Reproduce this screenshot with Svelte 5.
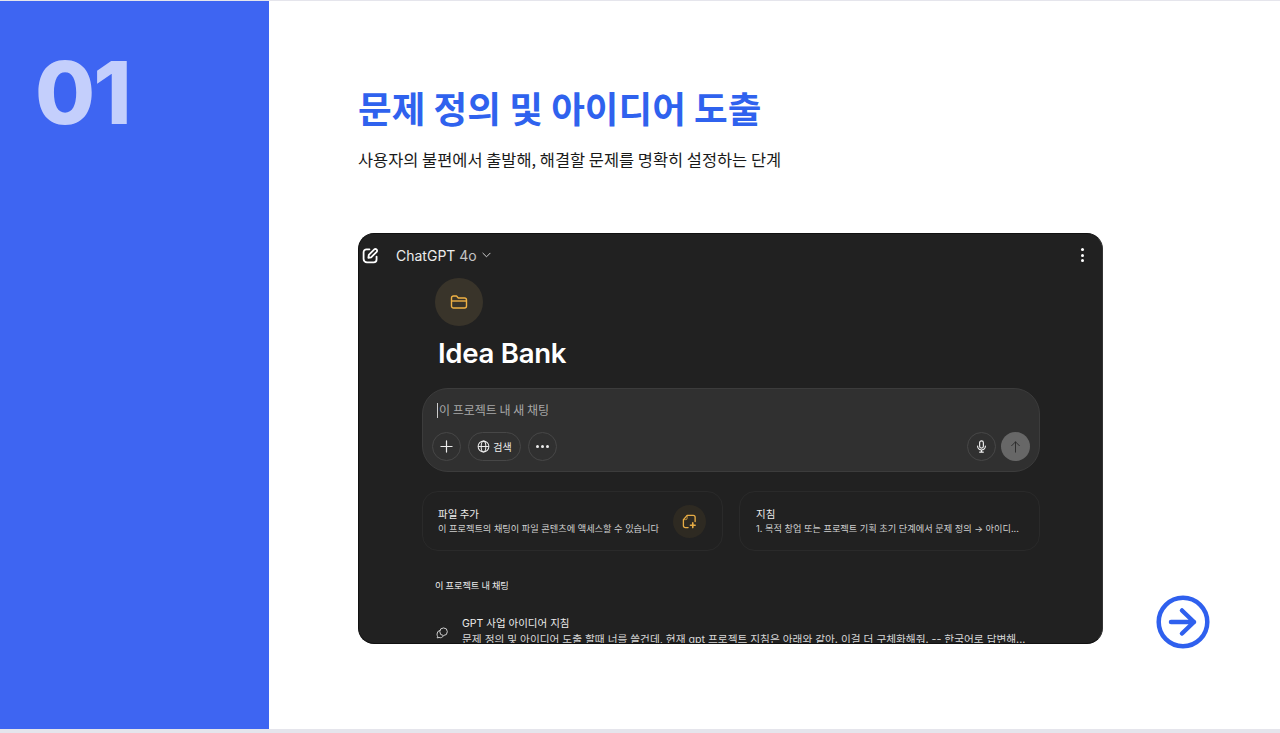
<script>
  const actions = [
    { title: '파일 추가', desc: '이 프로젝트의 채팅이 파일 콘텐츠에 액세스할 수 있습니다', icon: true },
    { title: '지침', desc: '1. 목적 창업 또는 프로젝트 기획 초기 단계에서 문제 정의 → 아이디...', icon: false }
  ];
</script>

<div class="page">
  <aside class="side"><span class="num">01</span></aside>
  <main class="content">
    <h1>문제 정의 및 아이디어 도출</h1>
    <p class="sub">사용자의 불편에서 출발해, 해결할 문제를 명확히 설정하는 단계</p>
    <div class="row">
      <section class="shot">
        <header class="bar">
          <svg class="edit" viewBox="0 0 16 16" fill="none" stroke="#fff" stroke-width="1.7" stroke-linecap="round" stroke-linejoin="round">
            <path d="M7 2.200H4.200A2.700 2.700 0 0 0 1.500 4.900v6.400A3.200 3.200 0 0 0 4.700 14.500h6.300a2.700 2.700 0 0 0 2.700-2.700V9" />
            <path d="M6 10.200l.4-2.700 5.200-5.200a1.400 1.400 0 0 1 2 0l.2.2a1.400 1.400 0 0 1 0 2L8.600 9.700z" />
          </svg>
          <span class="model">ChatGPT <em>4o</em></span>
          <svg class="chev" viewBox="0 0 10 6" fill="none" stroke="#d0d0d0" stroke-width="1.100" stroke-linecap="round" stroke-linejoin="round"><path d="M1 1l4 4 4-4" /></svg>
          <span class="dots"><i></i><i></i><i></i></span>
        </header>
        <div class="body">
          <div class="folder">
            <svg viewBox="0 0 18 16" fill="none" stroke="#f0b144" stroke-width="1.400" stroke-linejoin="round"><path d="M1.500 4a2 2 0 0 1 2-2h3l1.800 2H14.500a2 2 0 0 1 2 2v6a2 2 0 0 1-2 2h-11a2 2 0 0 1-2-2z" /><path d="M1.500 7h15" /></svg>
          </div>
          <h2>Idea Bank</h2>
          <div class="composer">
            <div class="ph"><span class="caret"></span>이 프로젝트 내 새 채팅</div>
            <div class="tools">
              <span class="btn round">
                <svg viewBox="0 0 14 14" fill="none" stroke="#ececec" stroke-width="1.300" stroke-linecap="round"><path d="M7 1v12M1 7h12" /></svg>
              </span>
              <span class="btn pill">
                <svg viewBox="0 0 14 14" fill="none" stroke="#ececec" stroke-width="1.100"><circle cx="7" cy="7" r="5.800" /><ellipse cx="7" cy="7" rx="2.500" ry="5.800" /><path d="M1.200 7h11.600" /></svg>
                검색
              </span>
              <span class="btn round more"><i></i><i></i><i></i></span>
              <span class="grow"></span>
              <span class="btn round">
                <svg viewBox="0 0 14 16" fill="none" stroke="#f2f2f2" stroke-width="1.400" stroke-linecap="round"><rect x="4.700" y="1" width="4.600" height="9" rx="2.300" /><path d="M2.200 7.500a4.800 4.800 0 0 0 9.600 0M7 12.500V15M4.800 15h4.400" /></svg>
              </span>
              <span class="send">
                <svg viewBox="0 0 12 14" fill="none" stroke="#2a2a2a" stroke-width="1.100" stroke-linecap="round" stroke-linejoin="round"><path d="M6 13V1M1.500 5.500L6 1l4.500 4.500" /></svg>
              </span>
            </div>
          </div>
          <div class="cards">
            {#each actions as a}
              <div class="card">
                <div class="card-text">
                  <strong>{a.title}</strong>
                  <span>{a.desc}</span>
                </div>
                {#if a.icon}
                  <span class="file-ic">
                    <svg viewBox="0 0 16 16" fill="none" stroke="#e8ad45" stroke-width="1.400" stroke-linecap="round" stroke-linejoin="round"><path d="M6.500 14.500H3.500a2 2 0 0 1-2-2V6L5.500 1.500H12a2 2 0 0 1 2 2V8" /><path d="M5.500 1.500V4.500a1.500 1.500 0 0 1-1.500 1.500H1.500" stroke-width=".8" /><path d="M11.500 9.500v5M9 12h5" stroke-width="1.700" /></svg>
                  </span>
                {/if}
              </div>
            {/each}
          </div>
          <div class="sect">이 프로젝트 내 채팅</div>
          <div class="chat">
            <svg class="bubble" viewBox="0 0 14 13" fill="none" stroke="#d0d0d0" stroke-width="1.150"><circle cx="8.800" cy="5" r="4.400" /><path d="M4.800 3.400a4.500 4.500 0 0 0-3.600 4.400c0 1.100 .3 1.900 .7 2.500l-.5 1.900 2.200-.5c1.900 .8 4 0 4.900-1.700" /></svg>
            <div class="chat-text">
              <b>GPT 사업 아이디어 지침</b>
              <span>문제 정의 및 아이디어 도출 할때 너를 쓸건데, 현재 gpt 프로젝트 지침은 아래와 같아. 이걸 더 구체화해줘. -- 한국어로 답변해...</span>
            </div>
          </div>
        </div>
      </section>
      <button class="next" aria-label="다음">
        <svg viewBox="0 0 54 54" fill="none" stroke="#2f60ee" stroke-linecap="round" stroke-linejoin="round"><circle cx="27" cy="27" r="24.300" stroke-width="4.500" /><path d="M15 27h23M26 15.500L38 27 26 38.500" stroke-width="4.500" /></svg>
      </button>
    </div>
  </main>
</div>

<style>
  :global(body) { margin: 0; background: #e5e5ec; }
  .page {
    height: 728px; margin-top: 1px; display: flex; background: #fff; overflow: hidden;
    font-family: Inter, "Noto Sans CJK KR", sans-serif;
  }
  .side { width: 269px; flex: none; background: #3e65f2; box-sizing: border-box; padding: 40px 0 0 35px; }
  .num { display: block; font: 800 87px/1.2 Inter, sans-serif; color: #c4cffc; letter-spacing: -2px; }
  .content { flex: 1; padding: 82px 0 0 89px; min-width: 0; }
  h1 { margin: 0; font: 700 36.600px/50px "Noto Sans CJK KR", sans-serif; color: #2f62ee; }
  .sub { margin: 14px 0 0; font: 400 16.430px/24px "Noto Sans CJK KR", sans-serif; color: #1a1a1a; }
  .row { display: flex; align-items: flex-end; gap: 53px; margin-top: 62px; }
  .shot { width: 745px; height: 411px; flex: none; background: #212121; border-radius: 16px; overflow: hidden; box-sizing: border-box; border: 1px solid #111; border-right-color: #333; color: #ececec; }
  .bar { height: 42px; display: flex; align-items: center; padding: 0 18px 0 3px; box-sizing: border-box; }
  .edit { width: 17px; height: 17px; flex: none; }
  .model { margin-left: 17px; font-size: 14px; color: #ececec; }
  .model em { font-style: normal; color: #c4c4c4; }
  .chev { width: 9px; height: 6px; margin-left: 5px; }
  .dots { margin-left: auto; display: flex; flex-direction: column; gap: 2.500px; }
  .dots i { width: 3px; height: 3px; border-radius: 50%; background: #fff; }
  .body { padding-left: 63px; width: 618px; }
  .folder { width: 48px; height: 48px; margin: 2px 0 0 13px; border-radius: 50%; background: #39342a; display: flex; align-items: center; justify-content: center; }
  .folder svg { width: 18px; height: 16px; }
  h2 { margin: 8px 0 0 16px; font: 600 27.600px/38px Inter, sans-serif; color: #fff; letter-spacing: -.3px; }
  .composer { margin-top: 16px; height: 84px; box-sizing: border-box; background: #303030; border: 1px solid #3c3c3c; border-radius: 26px; padding: 11px 9px 0; }
  .ph { font: 400 12px/20px "Noto Sans CJK KR", sans-serif; color: #a8a8a8; padding-left: 5px; display: flex; align-items: center; }
  .caret { width: 1px; height: 15px; background: #ccc; margin-right: 1px; }
  .tools { display: flex; align-items: center; margin-top: 12px; gap: 7px; }
  .btn { height: 29px; box-sizing: border-box; border: 1px solid #474747; border-radius: 15px; display: flex; align-items: center; justify-content: center; font: 400 10px/1 "Noto Sans CJK KR", sans-serif; color: #ececec; }
  .round { width: 29px; }
  .round svg { width: 13px; height: 13px; }
  .pill { width: 53px; gap: 3px; }
  .pill svg { width: 13px; height: 13px; }
  .more { gap: 2px; }
  .more i { width: 3px; height: 3px; border-radius: 50%; background: #ececec; }
  .grow { flex: 1; }
  .send { width: 29px; height: 29px; border-radius: 50%; background: #676767; display: flex; align-items: center; justify-content: center; margin-left: -2px; }
  .send svg { width: 11px; height: 12px; }
  .cards { display: grid; grid-template-columns: 301px 301px; gap: 16px; margin-top: 19px; }
  .card { height: 60px; box-sizing: border-box; border: 1px solid #2a2a2a; border-radius: 16px; padding: 0 16px 0 15px; display: flex; align-items: center; justify-content: space-between; }
  .card:last-child { padding-left: 16px; }
  .card-text { display: flex; flex-direction: column; gap: 0; margin-top: -1px; }
  .card-text strong { font: 400 10.500px/15px "Noto Sans CJK KR", sans-serif; color: #ececec; }
  .card-text span { font: 400 9.200px/15px Inter, "Noto Sans CJK KR", sans-serif; color: #d0d0d0; white-space: nowrap; }
  .file-ic { width: 33px; height: 33px; border-radius: 50%; background: #2e2a22; display: flex; align-items: center; justify-content: center; }
  .file-ic svg { width: 15px; height: 15px; }
  .sect { margin: 28px 0 0 13px; font: 400 9.200px/13px "Noto Sans CJK KR", sans-serif; color: #ececec; }
  .chat { display: flex; align-items: flex-start; margin: 24px 0 0 14px; white-space: nowrap; }
  .bubble { width: 12px; height: 12px; margin-top: 11px; flex: none; }
  .chat-text { margin-left: 14px; display: flex; flex-direction: column; }
  .chat-text b { font: 400 10.500px/16px Inter, "Noto Sans CJK KR", sans-serif; color: #ececec; }
  .chat-text span { font: 400 10.680px/16px Inter, "Noto Sans CJK KR", sans-serif; color: #d8d8d8; }
  .next { width: 54px; height: 54px; padding: 0; margin: 0 0 -5px; border: 0; background: none; flex: none; }
  .next svg { display: block; width: 54px; height: 54px; }
</style>
